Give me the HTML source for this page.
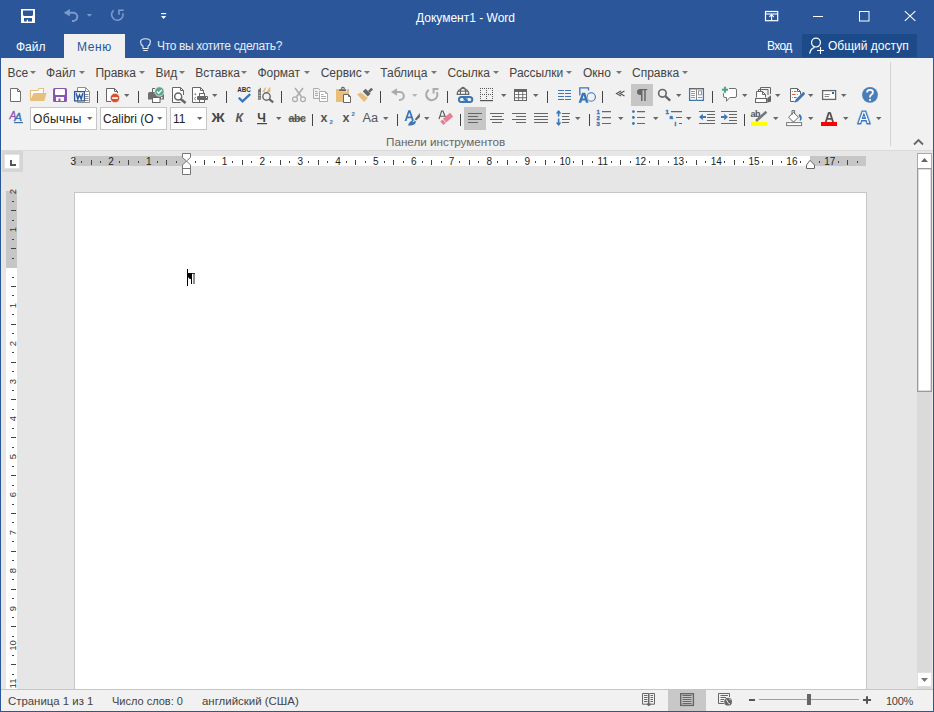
<!DOCTYPE html>
<html><head><meta charset="utf-8">
<style>
*{margin:0;padding:0;box-sizing:border-box}
html,body{width:934px;height:712px;overflow:hidden;background:#2B579A}
body{position:relative;font-family:"Liberation Sans",sans-serif;}
.a{position:absolute}
.t{position:absolute;white-space:nowrap;line-height:1}
svg{position:absolute;overflow:visible}
#title{left:0;top:0;width:934px;height:58px;background:#2B579A}
.wt{color:#fff;font-size:12px}
#ribbon{left:1px;top:58px;width:932px;height:93px;background:#F1F1F1;border-bottom:1px solid #DADADA}
.mn{color:#444;font-size:12px;top:67px}
.dd{position:absolute;width:0;height:0;border-left:3px solid transparent;border-right:3px solid transparent;border-top:3px solid #777}
.sep{position:absolute;width:1px;height:11px;background:#444}
#doc{left:1px;top:151px;width:932px;height:538px;background:#E6E6E6}
#page{left:74px;top:192px;width:793px;height:497px;background:#fff;border:1px solid #C6C6C6;border-bottom:none}
#status{left:1px;top:689px;width:932px;height:22px;background:#F1F1F1;border-top:1px solid #C6C6C6}
.st{color:#444;font-size:11px;top:696px}
.rn{top:157px;height:10px;line-height:10px;width:20px;text-align:center;font-size:10px;color:#222}
.rv{left:2px;width:20px;height:11px;line-height:11px;text-align:center;font-size:9.5px;color:#333;transform:rotate(-90deg)}
.box{position:absolute;background:#fff;border:1px solid #ABABAB}
</style></head><body>
<!-- TITLE BAR -->
<div id="title" class="a"></div>
<div class="t wt" style="left:416px;top:12px">Документ1 - Word</div>
<div class="t wt" style="left:16px;top:41px">Файл</div>
<div class="a" style="left:64px;top:34px;width:61px;height:25px;background:#F1F1F1"></div>
<div class="t" style="left:77px;top:41px;font-size:12px;color:#2B579A;letter-spacing:0.6px">Меню</div>
<div class="t" style="left:157px;top:40px;font-size:12px;color:#E6ECF4;letter-spacing:-0.35px">Что вы хотите сделать?</div>
<div class="t wt" style="left:767px;top:40px;letter-spacing:-0.6px">Вход</div>
<div class="a" style="left:802px;top:34px;width:115px;height:23px;background:#1D4A88"></div>
<div class="t wt" style="left:828px;top:40px">Общий доступ</div>

<!-- RIBBON -->
<div id="ribbon" class="a"></div>
<div class="a" style="left:890px;top:62px;width:1px;height:84px;background:#D4D4D4"></div>
<div class="t" style="left:386px;top:136px;font-size:11.7px;color:#666">Панели инструментов</div>
<div class="t mn" style="left:7.6px">Все</div>
<div class="t mn" style="left:46.1px">Файл</div>
<div class="t mn" style="left:95.4px">Правка</div>
<div class="t mn" style="left:155.6px">Вид</div>
<div class="t mn" style="left:195.3px">Вставка</div>
<div class="t mn" style="left:257.4px">Формат</div>
<div class="t mn" style="left:320.7px">Сервис</div>
<div class="t mn" style="left:380.3px">Таблица</div>
<div class="t mn" style="left:447.4px">Ссылка</div>
<div class="t mn" style="left:509.3px">Рассылки</div>
<div class="t mn" style="left:583.0px">Окно</div>
<div class="t mn" style="left:632.0px">Справка</div>
<svg style="left:0;top:0" width="934" height="200"><path fill="#777" d="M30 71H36L33 74Z M79 71H85L82 74Z M139 71H145L142 74Z M179 71H185L182 74Z M241 71H247L244 74Z M304 71H310L307 74Z M364 71H370L367 74Z M431 71H437L434 74Z M493 71H499L496 74Z M566 71H572L569 74Z M616 71H622L619 74Z M682 71H688L685 74Z"/></svg>

<!-- DOC AREA -->
<div id="doc" class="a"></div>
<div id="page" class="a"></div>
<div class="a" style="left:74px;top:156px;width:792px;height:10px;background:#fff"></div>
<div class="a" style="left:74px;top:156px;width:112px;height:10px;background:#C6C6C6"></div>
<div class="a" style="left:810px;top:156px;width:56px;height:10px;background:#C6C6C6"></div>
<div class="t rn" style="left:63.2px">3</div>
<div class="a" style="left:81px;top:161px;width:1px;height:2px;background:#444"></div>
<div class="a" style="left:91px;top:160px;width:1px;height:5px;background:#444"></div>
<div class="a" style="left:100px;top:161px;width:1px;height:2px;background:#444"></div>
<div class="t rn" style="left:101.0px">2</div>
<div class="a" style="left:119px;top:161px;width:1px;height:2px;background:#444"></div>
<div class="a" style="left:128px;top:160px;width:1px;height:5px;background:#444"></div>
<div class="a" style="left:138px;top:161px;width:1px;height:2px;background:#444"></div>
<div class="t rn" style="left:138.9px">1</div>
<div class="a" style="left:157px;top:161px;width:1px;height:2px;background:#444"></div>
<div class="a" style="left:166px;top:160px;width:1px;height:5px;background:#444"></div>
<div class="a" style="left:176px;top:161px;width:1px;height:2px;background:#444"></div>
<div class="a" style="left:195px;top:161px;width:1px;height:2px;background:#444"></div>
<div class="a" style="left:204px;top:160px;width:1px;height:5px;background:#444"></div>
<div class="a" style="left:214px;top:161px;width:1px;height:2px;background:#444"></div>
<div class="t rn" style="left:214.5px">1</div>
<div class="a" style="left:232px;top:161px;width:1px;height:2px;background:#444"></div>
<div class="a" style="left:242px;top:160px;width:1px;height:5px;background:#444"></div>
<div class="a" style="left:251px;top:161px;width:1px;height:2px;background:#444"></div>
<div class="t rn" style="left:252.4px">2</div>
<div class="a" style="left:270px;top:161px;width:1px;height:2px;background:#444"></div>
<div class="a" style="left:280px;top:160px;width:1px;height:5px;background:#444"></div>
<div class="a" style="left:289px;top:161px;width:1px;height:2px;background:#444"></div>
<div class="t rn" style="left:290.2px">3</div>
<div class="a" style="left:308px;top:161px;width:1px;height:2px;background:#444"></div>
<div class="a" style="left:318px;top:160px;width:1px;height:5px;background:#444"></div>
<div class="a" style="left:327px;top:161px;width:1px;height:2px;background:#444"></div>
<div class="t rn" style="left:328.0px">4</div>
<div class="a" style="left:346px;top:161px;width:1px;height:2px;background:#444"></div>
<div class="a" style="left:355px;top:160px;width:1px;height:5px;background:#444"></div>
<div class="a" style="left:365px;top:161px;width:1px;height:2px;background:#444"></div>
<div class="t rn" style="left:365.8px">5</div>
<div class="a" style="left:384px;top:161px;width:1px;height:2px;background:#444"></div>
<div class="a" style="left:393px;top:160px;width:1px;height:5px;background:#444"></div>
<div class="a" style="left:403px;top:161px;width:1px;height:2px;background:#444"></div>
<div class="t rn" style="left:403.7px">6</div>
<div class="a" style="left:422px;top:161px;width:1px;height:2px;background:#444"></div>
<div class="a" style="left:431px;top:160px;width:1px;height:5px;background:#444"></div>
<div class="a" style="left:441px;top:161px;width:1px;height:2px;background:#444"></div>
<div class="t rn" style="left:441.5px">7</div>
<div class="a" style="left:459px;top:161px;width:1px;height:2px;background:#444"></div>
<div class="a" style="left:469px;top:160px;width:1px;height:5px;background:#444"></div>
<div class="a" style="left:478px;top:161px;width:1px;height:2px;background:#444"></div>
<div class="t rn" style="left:479.3px">8</div>
<div class="a" style="left:497px;top:161px;width:1px;height:2px;background:#444"></div>
<div class="a" style="left:507px;top:160px;width:1px;height:5px;background:#444"></div>
<div class="a" style="left:516px;top:161px;width:1px;height:2px;background:#444"></div>
<div class="t rn" style="left:517.2px">9</div>
<div class="a" style="left:535px;top:161px;width:1px;height:2px;background:#444"></div>
<div class="a" style="left:545px;top:160px;width:1px;height:5px;background:#444"></div>
<div class="a" style="left:554px;top:161px;width:1px;height:2px;background:#444"></div>
<div class="t rn" style="left:555.0px">10</div>
<div class="a" style="left:573px;top:161px;width:1px;height:2px;background:#444"></div>
<div class="a" style="left:582px;top:160px;width:1px;height:5px;background:#444"></div>
<div class="a" style="left:592px;top:161px;width:1px;height:2px;background:#444"></div>
<div class="t rn" style="left:592.8px">11</div>
<div class="a" style="left:611px;top:161px;width:1px;height:2px;background:#444"></div>
<div class="a" style="left:620px;top:160px;width:1px;height:5px;background:#444"></div>
<div class="a" style="left:630px;top:161px;width:1px;height:2px;background:#444"></div>
<div class="t rn" style="left:630.6px">12</div>
<div class="a" style="left:649px;top:161px;width:1px;height:2px;background:#444"></div>
<div class="a" style="left:658px;top:160px;width:1px;height:5px;background:#444"></div>
<div class="a" style="left:668px;top:161px;width:1px;height:2px;background:#444"></div>
<div class="t rn" style="left:668.5px">13</div>
<div class="a" style="left:686px;top:161px;width:1px;height:2px;background:#444"></div>
<div class="a" style="left:696px;top:160px;width:1px;height:5px;background:#444"></div>
<div class="a" style="left:705px;top:161px;width:1px;height:2px;background:#444"></div>
<div class="t rn" style="left:706.3px">14</div>
<div class="a" style="left:724px;top:161px;width:1px;height:2px;background:#444"></div>
<div class="a" style="left:734px;top:160px;width:1px;height:5px;background:#444"></div>
<div class="a" style="left:743px;top:161px;width:1px;height:2px;background:#444"></div>
<div class="t rn" style="left:744.1px">15</div>
<div class="a" style="left:762px;top:161px;width:1px;height:2px;background:#444"></div>
<div class="a" style="left:772px;top:160px;width:1px;height:5px;background:#444"></div>
<div class="a" style="left:781px;top:161px;width:1px;height:2px;background:#444"></div>
<div class="t rn" style="left:781.9px">16</div>
<div class="a" style="left:800px;top:161px;width:1px;height:2px;background:#444"></div>
<div class="a" style="left:819px;top:161px;width:1px;height:2px;background:#444"></div>
<div class="t rn" style="left:819.8px">17</div>
<div class="a" style="left:838px;top:161px;width:1px;height:2px;background:#444"></div>
<div class="a" style="left:847px;top:160px;width:1px;height:5px;background:#444"></div>
<div class="a" style="left:857px;top:161px;width:1px;height:2px;background:#444"></div>
<div class="a" style="left:6px;top:191px;width:11px;height:498px;background:#fff"></div>
<div class="a" style="left:6px;top:191px;width:11px;height:77px;background:#C6C6C6"></div>
<div class="t rv" style="top:186.4px">2</div>
<div class="a" style="left:12px;top:201px;width:2px;height:1px;background:#444"></div>
<div class="a" style="left:11px;top:210px;width:5px;height:1px;background:#444"></div>
<div class="a" style="left:12px;top:220px;width:2px;height:1px;background:#444"></div>
<div class="t rv" style="top:224.3px">1</div>
<div class="a" style="left:12px;top:239px;width:2px;height:1px;background:#444"></div>
<div class="a" style="left:11px;top:248px;width:5px;height:1px;background:#444"></div>
<div class="a" style="left:12px;top:258px;width:2px;height:1px;background:#444"></div>
<div class="a" style="left:12px;top:277px;width:2px;height:1px;background:#444"></div>
<div class="a" style="left:11px;top:286px;width:5px;height:1px;background:#444"></div>
<div class="a" style="left:12px;top:295px;width:2px;height:1px;background:#444"></div>
<div class="t rv" style="top:299.9px">1</div>
<div class="a" style="left:12px;top:314px;width:2px;height:1px;background:#444"></div>
<div class="a" style="left:11px;top:324px;width:5px;height:1px;background:#444"></div>
<div class="a" style="left:12px;top:333px;width:2px;height:1px;background:#444"></div>
<div class="t rv" style="top:337.8px">2</div>
<div class="a" style="left:12px;top:352px;width:2px;height:1px;background:#444"></div>
<div class="a" style="left:11px;top:362px;width:5px;height:1px;background:#444"></div>
<div class="a" style="left:12px;top:371px;width:2px;height:1px;background:#444"></div>
<div class="t rv" style="top:375.6px">3</div>
<div class="a" style="left:12px;top:390px;width:2px;height:1px;background:#444"></div>
<div class="a" style="left:11px;top:399px;width:5px;height:1px;background:#444"></div>
<div class="a" style="left:12px;top:409px;width:2px;height:1px;background:#444"></div>
<div class="t rv" style="top:413.4px">4</div>
<div class="a" style="left:12px;top:428px;width:2px;height:1px;background:#444"></div>
<div class="a" style="left:11px;top:437px;width:5px;height:1px;background:#444"></div>
<div class="a" style="left:12px;top:447px;width:2px;height:1px;background:#444"></div>
<div class="t rv" style="top:451.2px">5</div>
<div class="a" style="left:12px;top:466px;width:2px;height:1px;background:#444"></div>
<div class="a" style="left:11px;top:475px;width:5px;height:1px;background:#444"></div>
<div class="a" style="left:12px;top:485px;width:2px;height:1px;background:#444"></div>
<div class="t rv" style="top:489.1px">6</div>
<div class="a" style="left:12px;top:504px;width:2px;height:1px;background:#444"></div>
<div class="a" style="left:11px;top:513px;width:5px;height:1px;background:#444"></div>
<div class="a" style="left:12px;top:522px;width:2px;height:1px;background:#444"></div>
<div class="t rv" style="top:526.9px">7</div>
<div class="a" style="left:12px;top:541px;width:2px;height:1px;background:#444"></div>
<div class="a" style="left:11px;top:551px;width:5px;height:1px;background:#444"></div>
<div class="a" style="left:12px;top:560px;width:2px;height:1px;background:#444"></div>
<div class="t rv" style="top:564.7px">8</div>
<div class="a" style="left:12px;top:579px;width:2px;height:1px;background:#444"></div>
<div class="a" style="left:11px;top:589px;width:5px;height:1px;background:#444"></div>
<div class="a" style="left:12px;top:598px;width:2px;height:1px;background:#444"></div>
<div class="t rv" style="top:602.6px">9</div>
<div class="a" style="left:12px;top:617px;width:2px;height:1px;background:#444"></div>
<div class="a" style="left:11px;top:626px;width:5px;height:1px;background:#444"></div>
<div class="a" style="left:12px;top:636px;width:2px;height:1px;background:#444"></div>
<div class="t rv" style="top:640.4px">10</div>
<div class="a" style="left:12px;top:655px;width:2px;height:1px;background:#444"></div>
<div class="a" style="left:11px;top:664px;width:5px;height:1px;background:#444"></div>
<div class="a" style="left:12px;top:674px;width:2px;height:1px;background:#444"></div>
<div class="t rv" style="top:678.2px">11</div>
<!-- tab selector -->
<div class="a" style="left:2px;top:151px;width:21px;height:21px;background:#D5D5D5"></div>
<div class="a" style="left:4px;top:154px;width:16px;height:15px;background:#fff;border:1px solid #E2E2E2"></div>
<div class="a" style="left:10px;top:160px;width:2px;height:6px;background:#555"></div>
<div class="a" style="left:10px;top:164px;width:6px;height:2px;background:#555"></div>
<!-- cursor + pilcrow -->
<div class="a" style="left:187px;top:269px;width:1px;height:17px;background:#000"></div>
<!-- scrollbar -->
<div class="a" style="left:917px;top:153px;width:15px;height:536px;background:#DADADA"></div>
<div class="box" style="left:917px;top:153px;width:15px;height:16px;border-color:#ABABAB"></div>
<div class="box" style="left:917px;top:168px;width:15px;height:224px;border:1px solid #9A9A9A;box-shadow:inset 0 0 0 0.5px #BDBDBD"></div>
<div class="box" style="left:917px;top:672px;width:15px;height:15px;border-color:#E0E0E0"></div>
<svg style="left:0;top:0" width="934" height="712" viewBox="0 0 934 712">
<path d="M182.5 153.5H190.5V157.5L186.5 161L190.5 165V174.5H182.5V165L186.5 161L182.5 157.5Z" fill="#fff" stroke="#777" stroke-width="1"/>
<path d="M182.5 168.5H190.5" stroke="#777" stroke-width="1"/>
<path d="M806.5 168.5H814.5V165L810 160.3L806.5 165Z" fill="#fff" stroke="#666" stroke-width="1"/>
<path d="M188 273H192V279H190.6C189 279 188 277.6 188 276Z" fill="#000"/>
<rect x="191" y="273" width="1" height="11" fill="#000"/>
<rect x="192" y="273" width="3" height="1" fill="#333"/>
<rect x="193.2" y="274" width="1.6" height="10" fill="#777"/>
</svg>


<!-- STATUS -->
<div id="status" class="a"></div>
<div class="t st" style="left:8px;font-size:11.4px">Страница 1 из 1</div>
<div class="t st" style="left:112px">Число слов: 0</div>
<div class="t st" style="left:202px;font-size:11.45px">английский (США)</div>
<div class="t st" style="left:886px;letter-spacing:-0.3px">100%</div>

<div class="box" style="left:30px;top:107px;width:67px;height:23px;border-color:#C6C6C6"></div>
<div class="box" style="left:100px;top:107px;width:67px;height:23px;border-color:#C6C6C6"></div>
<div class="box" style="left:170px;top:107px;width:37px;height:23px;border-color:#C6C6C6"></div>
<div class="t" style="left:33px;top:113px;font-size:12px;color:#222;letter-spacing:0.4px">Обычны</div>
<div class="t" style="left:103px;top:113px;font-size:12px;color:#222">Calibri (О</div>
<div class="t" style="left:173px;top:113px;font-size:12px;color:#222">11</div>

<svg style="left:0;top:0" width="934" height="712" viewBox="0 0 934 712">
<!-- TITLE / STATUS ICONS -->
<g fill="none" stroke-width="1">
<!-- QAT save -->
<path d="M21 9H35V23H21Z M23 10.5V14.5Q23 16 24.5 16H31.5Q33 16 33 14.5V10.5Z M24 18V21.5H26.8V19.8H28V21.5H32V18Z" fill="#fff" fill-rule="evenodd"/>
<!-- QAT undo -->
<path d="M63.7 12.7L69.9 9V16.5Z" fill="#7A9ACB"/>
<path d="M67 12.7H73.2A4.1 4.1 0 0 1 73.2 20.9H72" stroke="#7A9ACB" stroke-width="2"/>
<path d="M86.8 14H92L89.4 16.8Z" fill="#7A9ACB"/>
<!-- QAT redo -->
<path d="M113.6 10.4A5.6 5.6 0 1 0 122.8 13.2" stroke="#7A9ACB" stroke-width="1.6"/>
<path d="M118.2 9.4H123.8V10.9H119.8V14.8H118.2Z" fill="#7A9ACB"/>
<!-- customize -->
<rect x="161" y="13" width="5.2" height="1.2" fill="#fff"/>
<path d="M161 16H166.2L163.6 19Z" fill="#fff"/>
<!-- ribbon display options -->
<rect x="765.5" y="11.5" width="12.2" height="9.2" stroke="#fff" stroke-width="1.2"/>
<path d="M765.5 14H777.7" stroke="#fff" stroke-width="1.1"/>
<path d="M771.6 14.5V20.5M769.4 16.8L771.6 14.6L773.8 16.8" stroke="#fff" stroke-width="1.1"/>
<!-- minimize -->
<rect x="813" y="16" width="10" height="1" fill="#fff"/>
<!-- maximize -->
<rect x="859.5" y="11.5" width="9.5" height="9.5" stroke="#fff"/>
<!-- close -->
<path d="M904.8 11.2L915.3 20.9M915.3 11.2L904.8 20.9" stroke="#fff" stroke-width="1.1"/>
<!-- lightbulb -->
<path d="M143 48.5V46.3Q140.6 44.6 140.6 41.8Q140.6 38.8 145.5 38.8Q150.4 38.8 150.4 41.8Q150.4 44.6 148 46.3V48.5Z" stroke="#E6ECF4" stroke-width="1.1"/>
<path d="M143.2 50.5H147.8" stroke="#E6ECF4" stroke-width="1.1"/>
<!-- share person -->
<circle cx="816" cy="42.6" r="4.4" stroke="#fff" stroke-width="1.2"/>
<path d="M809.7 53.6Q810.5 48.6 814.6 47.4" stroke="#fff" stroke-width="1.2"/>
<path d="M817 50.5H824M820.5 47V54" stroke="#fff" stroke-width="1.1"/>
<!-- scrollbar arrows -->
<path d="M921 162H928L924.5 158Z" fill="#666"/>
<path d="M921 678H928L924.5 682Z" fill="#777"/>
<!-- status: read mode -->
<path d="M642.5 693.5H648.5L649 694V704.2H642.5Z M649 694L649.5 693.5H654.5V704.2H649" stroke="#666"/>
<path d="M644 695.5H647.5M644 697.5H647.5M644 699.5H647.5M644 701.5H647.5M650.5 695.5H653M650.5 697.5H653M650.5 699.5H653M650.5 701.5H653" stroke="#666"/>
<path d="M648.5 693.5V704M647 704L648.8 706L650.6 704Z" stroke="#666" fill="#666"/>
<!-- print layout highlight -->
<rect x="668" y="690" width="38" height="21" fill="#C8C8C8"/>
<rect x="680.7" y="693.7" width="12.7" height="11.7" stroke="#666" stroke-width="1.4"/>
<path d="M682.5 695.5H691.5M682.5 697.5H691.5M682.5 699.5H691.5M682.5 701.5H691.5M682.5 703.5H691.5" stroke="#666"/>
<!-- web layout -->
<path d="M724 703.5H718.5V693.5H729.5V697" stroke="#666"/>
<path d="M720.5 695.5H728M720.5 697.5H726M720.5 699.5H724M720.5 701.5H723.5" stroke="#666"/>
<circle cx="728.1" cy="701.7" r="3.9" fill="#666"/>
<path d="M725.8 699.6Q727.5 700.5 727.8 702.2Q728.3 703.7 730 704" stroke="#F1F1F1" stroke-width="1"/>
<path d="M729.4 698.6L730.4 700.2" stroke="#F1F1F1" stroke-width=".9"/>
<!-- zoom -->
<rect x="749" y="699" width="6" height="2" fill="#555"/>
<rect x="759" y="699" width="100" height="1" fill="#A0A0A0"/>
<rect x="807" y="694" width="4" height="11" fill="#666"/>
<path d="M863 700H871M867 696.2V703.8" stroke="#555" stroke-width="2"/>
</g>
<!-- ROW 1 ICONS -->
<g fill="none" stroke-width="1">
<!-- new doc -->
<path d="M10.5 88.5H17.5L20.5 91.5V101.5H10.5Z" fill="#fff" stroke="#707070"/>
<path d="M17.5 88.5V91.5H20.5" stroke="#707070"/>
<!-- open -->
<path d="M30.5 100.5V90.5H38L39 88.5H43.5V93" fill="#fff" stroke="#E8C07D" stroke-width="1.2"/>
<path d="M33.5 93H46.5L44.3 101H30Z" fill="#E8C07D"/>
<!-- save -->
<rect x="53" y="88" width="14" height="14" rx="1.5" fill="#8A55B2"/>
<rect x="55" y="89" width="10" height="6" rx="1" fill="#fff"/>
<rect x="56" y="97" width="8" height="4" fill="#fff"/>
<rect x="58.5" y="98.5" width="2" height="2.5" fill="#8A55B2"/>
<!-- word doc -->
<path d="M77.5 87.5H85.5L89.5 91.5V102.5H77.5Z" fill="#fff" stroke="#8E8E8E"/>
<path d="M85.5 87.5V91.5H89.5" stroke="#8E8E8E"/>
<path d="M85 94.5H88.5M85 96.5H88.5M85 98.5H88.5M85 100.5H88.5" stroke="#8E8E8E"/>
<rect x="74.6" y="91.6" width="9.8" height="9.3" fill="#fff" stroke="#2B5797" stroke-width="1.3"/>
<path d="M76.2 93.2L77.8 99L79.5 95L81.2 99L82.8 93.2" stroke="#2B5797" stroke-width="1.5"/>
<!-- close doc -->
<path d="M111 101.5H106.5V88.5H114.5L117.5 91.5V93" fill="#fff" stroke="#666"/>
<path d="M114.5 88.5V91.5H117.5" stroke="#666"/>
<circle cx="115" cy="98" r="4.7" fill="#D9512C" stroke="#F1F1F1" stroke-width=".7"/>
<rect x="112.2" y="97.2" width="5.6" height="1.7" fill="#fff"/>
<!-- print w check -->
<path d="M152.5 92V88.5H155" stroke="#666"/>
<path d="M148 93.5Q148 92 149.5 92H162.5Q164 92 164 93.5V99.5H148Z" fill="#6E6E6E"/>
<rect x="152.5" y="97.5" width="7.5" height="5" fill="#fff" stroke="#666"/>
<rect x="161" y="97" width="1.5" height="1.5" fill="#fff"/>
<circle cx="159.4" cy="91.5" r="4.7" fill="#5BA888" stroke="#F1F1F1" stroke-width="0.8"/>
<path d="M157 91.5L158.7 93.2L161.8 89.9" stroke="#fff" stroke-width="1.3"/>
<!-- print preview -->
<path d="M183.5 95V90.5L180.5 87.5H172.5V102.5H180.5" fill="#fff" stroke="#666"/>
<path d="M180.5 87.5V90.5H183.5" stroke="#666"/>
<circle cx="178.2" cy="96.5" r="3.5" fill="#fff" stroke="#666" stroke-width="1.5"/>
<path d="M180.6 99L185.6 103" stroke="#666" stroke-width="2.5"/>
<!-- doc printer -->
<path d="M199 102.5H192.5V87.5H200.5L203.5 90.5V93" fill="#fff" stroke="#666"/>
<path d="M200.5 87.5V90.5H203.5" stroke="#666"/>
<circle cx="195.3" cy="94.3" r="1" fill="#888"/>
<path d="M196 97.2Q194.6 97.2 194.6 98.6Q194.6 100 196 100" stroke="#888"/>
<rect x="199.5" y="93.5" width="5" height="3" fill="#fff" stroke="#666"/>
<rect x="197" y="96" width="11" height="4" rx="1" fill="#666"/>
<rect x="199.5" y="99.5" width="5" height="3" fill="#fff" stroke="#666"/>
<rect x="206" y="97" width="1" height="1" fill="#fff"/>
<!-- ABC -->
<text x="237.2" y="92" font-family="Liberation Sans" font-weight="bold" font-size="6.3" fill="#333" stroke="none">ABC</text>
<path d="M238.8 97.8L242.5 101.4L250.2 94.2" stroke="#3A76B8" stroke-width="2.3"/>
<!-- research -->
<path d="M258 90L261 87.5V99.5L258 100Z" fill="#777"/>
<path d="M258.5 93H260.5M258.5 95.5H260.5M258.5 98H260.5" stroke="#ddd" stroke-width=".7"/>
<path d="M262.3 92L265 87.5H266.3L264.5 92ZM266.5 92L269.3 87.5H270.3V92Z" fill="#E8B86A"/>
<circle cx="266.5" cy="96.5" r="3.7" fill="#F1F1F1" stroke="#666" stroke-width="1.4"/>
<path d="M269.2 99.2L273.2 102.4" stroke="#666" stroke-width="2.2"/>
<!-- scissors -->
<path d="M295 88L301.5 96.8M303 88L296.5 96.8" stroke="#ABABAB" stroke-width="1.6"/>
<circle cx="295" cy="99.2" r="2.4" stroke="#ABABAB" stroke-width="1.2"/>
<circle cx="303" cy="99.2" r="2.4" stroke="#ABABAB" stroke-width="1.2"/>
<!-- copy -->
<path d="M319.5 98.5H313.5V88.5H318.5L320 90" stroke="#ABABAB"/>
<path d="M315 91.5H317.5M315 93.5H318M315 95.5H318" stroke="#ABABAB"/>
<path d="M319.5 91.5H325.5L327.5 93.5V101.5H319.5Z" fill="#fff" stroke="#ABABAB"/>
<path d="M325.5 91.5V93.5H327.5" stroke="#ABABAB"/>
<path d="M321 94.5H323.5M321 96.5H326M321 98.5H326" stroke="#ABABAB"/>
<!-- paste -->
<path d="M336 89H339V92H347V89H349V94H343V102H336Z" fill="#E8BE78"/>
<rect x="339" y="89.3" width="7.2" height="1.9" rx=".5" fill="#666"/>
<path d="M341.6 89.5V88.2Q341.6 87.3 342.5 87.3H343.3Q344.2 87.3 344.2 88.2V89.5" stroke="#666" stroke-width="1.2"/>
<path d="M343.5 94.5H348.5L350.5 96.5V102.5H343.5Z" fill="#fff" stroke="#666"/>
<path d="M348.5 94.5V96.5H350.5" stroke="#666"/>
<!-- format painter -->
<path d="M357 94.2L360.8 92.6L367.8 98L364 102Z" fill="#E8BE78"/>
<path d="M362.8 91.6L365.6 88.8L370.6 93.8L367.8 96.6Z" fill="#666"/>
<path d="M368 91L371.2 87.8L373 89.6L369.8 92.8Z" fill="#666"/>
<!-- undo -->
<path d="M391 92L397 88.2V95.8Z" fill="#ABABAB"/>
<path d="M395 92H399.8A4 4 0 0 1 399.8 100H399" stroke="#ABABAB" stroke-width="2"/>
<!-- redo -->
<path d="M428.8 89.8A5.6 5.6 0 1 0 436.8 92" stroke="#ABABAB" stroke-width="2"/>
<path d="M432.6 88H438.5V89.9H434.6V93.6H432.6Z" fill="#ABABAB"/>
<!-- hyperlink -->
<path d="M457.2 94.3A5.8 5.8 0 0 1 468.8 94.3Z" fill="#fff" stroke="#666" stroke-width="1.2"/>
<path d="M458.3 91.2H467.7" stroke="#666" stroke-width="1.1"/>
<path d="M460.4 94.3V91.2Q460.6 88 463 87.3Q465.4 88 465.6 91.2V94.3" stroke="#666" stroke-width="1.1"/>
<rect x="458.9" y="96.9" width="8" height="5.2" rx="2.6" stroke="#3A76B8" stroke-width="2"/>
<rect x="464.3" y="96.9" width="8" height="5.2" rx="2.6" stroke="#3A76B8" stroke-width="2"/>
<path d="M463.6 97.6L467.4 101.4" stroke="#3A76B8" stroke-width="1.8"/><path d="M462.4 98.6L464.6 101" stroke="#F1F1F1" stroke-width=".7"/><path d="M466.4 98L468.6 100.4" stroke="#F1F1F1" stroke-width=".7"/>
<!-- table borders dotted -->
<path fill="#555" stroke="none" d="M480 88h1v1h-1zM480 94h1v1h-1zM482 88h1v1h-1zM482 94h1v1h-1zM484 88h1v1h-1zM484 94h1v1h-1zM486 88h1v1h-1zM486 94h1v1h-1zM488 88h1v1h-1zM488 94h1v1h-1zM490 88h1v1h-1zM490 94h1v1h-1zM492 88h1v1h-1zM492 94h1v1h-1zM480 90h1v1h-1zM480 92h1v1h-1zM480 96h1v1h-1zM480 98h1v1h-1zM486 90h1v1h-1zM486 92h1v1h-1zM486 96h1v1h-1zM486 98h1v1h-1zM492 90h1v1h-1zM492 92h1v1h-1zM492 96h1v1h-1zM492 98h1v1h-1z"/>
<rect x="480" y="100" width="13" height="1.2" fill="#555"/>
<!-- insert table -->
<rect x="514" y="89" width="13" height="12" fill="#666"/>
<path fill="#fff" d="M515 92h3.2v2.2h-3.2zM519.1 92h3.2v2.2h-3.2zM523.2 92h2.8v2.2h-2.8zM515 95.1h3.2v2.2h-3.2zM519.1 95.1h3.2v2.2h-3.2zM523.2 95.1h2.8v2.2h-2.8zM515 98.2h3.2v1.8h-3.2zM519.1 98.2h3.2v1.8h-3.2zM523.2 98.2h2.8v1.8h-2.8z"/>
<!-- columns -->
<path d="M558 90.5H564M565 90.5H571M558 93.5H564M565 93.5H571M558 96.5H564M565 96.5H571M558 99.5H564M565 99.5H571" stroke="#3A76B8" stroke-width="1.2"/>
<!-- textbox A -->
<path d="M579.8 95.5V87.9H588.5V90.5" stroke="#3A76B8" stroke-width="1.3"/>
<circle cx="591.2" cy="97" r="4.2" stroke="#3A76B8" stroke-width="1.1"/>
<path d="M578.6 102.8L582 92.8H585.2L588.6 102.8H585.9L585.2 100.5H582L581.3 102.8Z M582.6 98.5H584.6L583.6 95.2Z" fill="#3A76B8" fill-rule="evenodd" stroke="#F1F1F1" stroke-width=".8" paint-order="stroke"/>
<!-- « -->
<path d="M621 91L616.5 93.5L621 96M624.5 91L620 93.5L624.5 96" stroke="#555" stroke-width="1.1"/>
<!-- pilcrow button -->
<rect x="631" y="84" width="22" height="22" fill="#C6C6C6"/>
<path d="M641.6 89V95H640.2Q637 95 637 92Q637 89 640.2 89Z" fill="#666"/>
<path d="M640 89.6H647.2" stroke="#666" stroke-width="1.2"/>
<rect x="641" y="89" width="1.5" height="12" fill="#666"/>
<rect x="644.2" y="89" width="1.5" height="12" fill="#666"/>
<!-- find -->
<circle cx="662.4" cy="93.3" r="3.8" stroke="#666" stroke-width="1.6"/>
<path d="M665.3 96.2L670.2 100.6" stroke="#666" stroke-width="2.3"/>
<!-- reading layout -->
<path d="M689.6 89V100.4H703.4V89" fill="#fff" stroke="#3A76B8" stroke-width="1.3"/>
<path d="M689 88.7H704" stroke="#666" stroke-width="1.4"/>
<path d="M696.5 88.5V100.5" stroke="#888"/>
<path d="M691 91.5H695M691 93.5H695M691 95.5H695M691 97.5H695M698 97.5H702" stroke="#999"/>
<rect x="698.5" y="90.8" width="3" height="4" stroke="#999"/>
<!-- comment -->
<path d="M729 88.5H735Q736.5 88.5 736.5 90V96Q736.5 97.5 735 97.5H729.8L726.5 101.2V97.5H725Q723.5 97.5 723.5 96V93.2" fill="#fff" stroke="#707070"/>
<path d="M725 86.8V92.8M721.9 89.8H728.1" stroke="#4DA584" stroke-width="2.1"/>
<!-- print stack -->
<path d="M760.5 91V87.5H770.5V94" stroke="#666"/>
<path d="M758.5 91V89.5H768V95" stroke="#666"/>
<path d="M756.5 97.5V91.5H762.5L765.5 94.5V97.5" fill="#fff" stroke="#666"/>
<path d="M762.5 91.5V94.5H765.5" stroke="#666"/>
<rect x="755.5" y="98.5" width="11" height="4" fill="#fff" stroke="#666"/>
<path d="M767.2 98.2L771 95.2V101.6L767.2 102.8Z" fill="#666"/>
<!-- track changes -->
<path d="M795 101.5H790.5V88.5H797.5L800.5 91.5V95" fill="#fff" stroke="#666"/>
<path d="M797.5 88.5V91.5H800.5" stroke="#666"/>
<path d="M794 91.5H796.5M792.2 94.5H795.5M794 97.5H796.5" stroke="#D9512C" stroke-width="1.2"/>
<path d="M792 91h1v1h-1zM797 94h1v1h-1zM792 97h1v1h-1z" fill="#999"/>
<path d="M794.6 102.8L795.6 99.4L802.6 92.4Q803.4 91.6 804.2 92.4L804.6 92.8Q805.4 93.6 804.6 94.4L797.6 101.4Z" fill="#3A76B8" stroke="#F1F1F1" stroke-width=".6" paint-order="stroke"/>
<!-- envelope -->
<rect x="822.6" y="90.6" width="13" height="8.8" fill="#fff" stroke="#666" stroke-width="1.3"/>
<path d="M824.5 94.5H830M824.5 96.5H829" stroke="#888"/>
<rect x="832" y="92" width="2" height="2" fill="#2B65B0"/>
<!-- help -->
<circle cx="870" cy="94.8" r="7.9" fill="#4A7EB8"/>
<path d="M867.1 92.4Q867.1 89.9 870 89.9Q872.9 89.9 872.9 92.3Q872.9 93.9 871.2 94.8Q870 95.5 870 97.4" stroke="#fff" stroke-width="1.8"/>
<rect x="869.1" y="99" width="1.8" height="1.8" fill="#fff"/>
<!-- separators row1 -->
<path fill="#444" d="M97 91h1v12h-1zM138 91h1v12h-1zM226 91h1v12h-1zM281 91h1v12h-1zM380 91h1v12h-1zM447 91h1v12h-1zM547 91h1v12h-1zM602 91h1v12h-1zM712 91h1v12h-1z"/>
<!-- dropdown arrows row1 -->
<path fill="#666" d="M124 94h5.5l-2.75 3zM212 94h5.5l-2.75 3zM501 94h5.5l-2.75 3zM533 94h5.5l-2.75 3zM676 94h5.5l-2.75 3zM742 94h5.5l-2.75 3zM775 94h5.5l-2.75 3zM808 94h5.5l-2.75 3zM841 94h5.5l-2.75 3z"/>
<path fill="#B5B5B5" d="M412 94h5.5l-2.75 3z"/>
</g>
<!-- ROW 2 ICONS -->
<g fill="none" stroke-width="1" font-family="Liberation Sans">
<!-- styles AA -->
<text x="9.4" y="119.2" font-style="italic" font-size="10.2" fill="#8A55B2" stroke="#8A55B2" stroke-width=".3">A</text>
<text x="14.2" y="121" font-style="italic" font-size="11.6" fill="#3A6FB0" stroke="#3A6FB0" stroke-width=".35">A</text>
<rect x="14" y="122" width="9" height="1.2" fill="#3A6FB0"/>
<!-- B I U -->
<text x="211.4" y="122.2" font-weight="bold" font-size="12.8" fill="#444" textLength="13.2" lengthAdjust="spacingAndGlyphs">Ж</text>
<text x="235.4" y="122.2" font-style="italic" font-weight="bold" font-size="12.3" fill="#555">К</text>
<text x="257.3" y="121.8" font-weight="bold" font-size="12.3" fill="#444">Ч</text>
<rect x="257" y="123" width="10" height="1.2" fill="#444"/>
<text x="288.5" y="121.8" font-weight="bold" font-size="10.6" fill="#555" letter-spacing="-0.4">abc</text>
<rect x="288.5" y="118.3" width="17" height="1.1" fill="#555"/>
<!-- subscript / superscript -->
<text x="320.6" y="121.9" font-weight="bold" font-size="12.6" fill="#555">x</text>
<text x="329.6" y="124.2" font-weight="bold" font-size="6" fill="#3A76B8">2</text>
<text x="342.6" y="121.9" font-weight="bold" font-size="12.6" fill="#555">x</text>
<text x="351.6" y="116.3" font-weight="bold" font-size="6" fill="#3A76B8">2</text>
<!-- Aa -->
<text x="362.6" y="121.8" font-size="12.5" fill="#555" textLength="15.6" lengthAdjust="spacingAndGlyphs">Aa</text>
<!-- text effects brush -->
<path d="M404.6 121L408.3 110.3H410.4L414.1 121H412.1L411.2 118.2H407.4L406.5 121Z M407.9 116.5H410.7L409.3 112.4Z" fill="#3A76B8" fill-rule="evenodd"/>
<path d="M408 125.6Q409 121 413.5 120L416 121.6Q415.6 125 411 125.6Z" fill="#3A76B8"/>
<path d="M413 120.8L414.2 121.8" stroke="#F1F1F1" stroke-width="1.2"/>
<path d="M414.8 119.2L420 113L419.8 117.3L416.2 120.6Z" fill="#666"/>
<!-- clear formatting -->
<path d="M439 119.2L441.6 111H443L445.5 117.5M440.2 116.2H444.2" stroke="#555" stroke-width="1.1"/>
<path d="M443 118.8L450 112.8L453.2 116.4L446.2 122.4Z" fill="#E57F95"/>
<path d="M440.2 121.4L442.6 119.4L445.8 123L443.4 125Z" fill="#E57F95"/>
<!-- align left button -->
<rect x="464" y="107" width="22" height="23" fill="#C6C6C6"/>
<path d="M468 113.5H482M468 116.5H478M468 119.5H482M468 122.5H478" stroke="#666" stroke-width="1.2"/>
<path d="M490 113.5H504M492 116.5H502M490 119.5H504M492 122.5H502" stroke="#666" stroke-width="1.2"/>
<path d="M512 113.5H526M516 116.5H526M512 119.5H526M516 122.5H526" stroke="#666" stroke-width="1.2"/>
<path d="M534 113.5H548M534 116.5H548M534 119.5H548M534 122.5H548" stroke="#666" stroke-width="1.2"/>
<!-- line spacing -->
<path d="M558.6 111V116.6M558.6 118.6V125" stroke="#3A76B8" stroke-width="1.6"/>
<path d="M555.8 113.4L558.6 110L561.4 113.4ZM555.8 122.6L558.6 126L561.4 122.6Z" fill="#3A76B8"/>
<path d="M562 113.5H570M562 116.5H569M562 119.5H570M562 122.5H569" stroke="#666" stroke-width="1.2"/>
<!-- numbering -->
<text x="596.6" y="114" font-weight="bold" font-size="6" fill="#3A76B8" stroke="#3A76B8" stroke-width=".35">1</text>
<text x="596.6" y="120.2" font-weight="bold" font-size="6" fill="#3A76B8" stroke="#3A76B8" stroke-width=".35">2</text>
<text x="596.6" y="126" font-weight="bold" font-size="6" fill="#3A76B8" stroke="#3A76B8" stroke-width=".35">3</text>
<path d="M602 111.6H611M602 117.6H611M602 123.5H611" stroke="#666" stroke-width="1.2"/>
<!-- bullets -->
<circle cx="633.4" cy="111.6" r="1.4" fill="#3A76B8"/>
<circle cx="633.4" cy="117.5" r="1.4" fill="#3A76B8"/>
<circle cx="633.4" cy="123.5" r="1.4" fill="#3A76B8"/>
<path d="M637 111.6H645M637 117.5H645M637 123.5H645" stroke="#666" stroke-width="1.2"/>
<!-- multilevel -->
<text x="665.6" y="113.8" font-weight="bold" font-size="6" fill="#3A76B8" stroke="#3A76B8" stroke-width=".4">1</text>
<text x="669.6" y="119.4" font-weight="bold" font-size="6" fill="#3A76B8" stroke="#3A76B8" stroke-width=".4">a</text>
<text x="674.6" y="125.6" font-weight="bold" font-size="6" fill="#3A76B8" stroke="#3A76B8" stroke-width=".4">i</text>
<path d="M671 111.6H682M676 117.5H682M679 123.5H682" stroke="#666" stroke-width="1.2"/>
<!-- decrease / increase indent -->
<path d="M699 111.5H715M707 114.5H715M707 117.5H715M707 120.5H715M699 123.5H715" stroke="#666" stroke-width="1.2"/>
<path d="M699 117L702.8 113.8V116H706V118H702.8V120.2Z" fill="#3A76B8"/>
<path d="M721 111.5H737M729 114.5H737M729 117.5H737M729 120.5H737M721 123.5H737" stroke="#666" stroke-width="1.2"/>
<path d="M728 117L724.2 113.8V116H721V118H724.2V120.2Z" fill="#3A76B8"/>
<!-- highlight -->
<text x="750.6" y="116.8" font-weight="bold" font-size="9" fill="#555" letter-spacing="-0.5">ab</text>
<path d="M756 121L766.4 111.8" stroke="#777" stroke-width="2.6"/>
<rect x="751" y="122" width="16.2" height="4" fill="#FFFF00"/>
<!-- shading -->
<path d="M788.6 117.2L793.5 112.3L798.4 117.2L793.5 122.1Z" fill="#fff" stroke="#666"/>
<path d="M792 115V110.6H794.6V114" stroke="#666"/>
<path d="M799.5 114Q802.4 115.5 801.6 119.5L799.8 121.3Q800.6 117.5 798.6 115.2Z" fill="#3A76B8"/>
<rect x="786.6" y="122.6" width="15" height="3" fill="#fff" stroke="#777"/>
<!-- font color -->
<path d="M825.7 122.2L828.7 112.9H830.1L833.1 122.2M826.9 118.9H831.9" stroke="#555" stroke-width="1.8" stroke-linejoin="bevel"/>
<rect x="821" y="122" width="16" height="4" fill="#FF0000"/>
<!-- text effects outlined A -->
<path d="M857.8 123.6L862.2 111.3H865.6L870 123.6H867.2L866.2 120.6H861.6L860.6 123.6Z M862.3 118.4H865.5L863.9 113.8Z" fill="#fff" stroke="#B5CCE8" stroke-width="2.6" fill-rule="evenodd" stroke-linejoin="round"/>
<path d="M857.8 123.6L862.2 111.3H865.6L870 123.6H867.2L866.2 120.6H861.6L860.6 123.6Z M862.3 118.4H865.5L863.9 113.8Z" fill="#fff" stroke="#3A76B8" stroke-width="1.1" fill-rule="evenodd"/>
<!-- separators row2 -->
<path fill="#444" d="M312 114h1v12h-1zM397 114h1v12h-1zM460 114h1v12h-1zM589 114h1v12h-1zM744 114h1v12h-1z"/>
<!-- arrows row2 -->
<path fill="#666" d="M87 117h5.5l-2.75 3zM157 117h5.5l-2.75 3zM197 117h5.5l-2.75 3zM276 117h5.5l-2.75 3zM383 117h5.5l-2.75 3zM424 117h5.5l-2.75 3zM575 117h5.5l-2.75 3zM618 117h5.5l-2.75 3zM653 117h5.5l-2.75 3zM686 117h5.5l-2.75 3zM773 117h5.5l-2.75 3zM808 117h5.5l-2.75 3zM843 117h5.5l-2.75 3zM876 117h5.5l-2.75 3z"/>
<!-- collapse chevron -->
<path d="M914 144.5L918.5 140L923 144.5" stroke="#666" stroke-width="1.8"/>
</g>
</svg>

</body></html>
